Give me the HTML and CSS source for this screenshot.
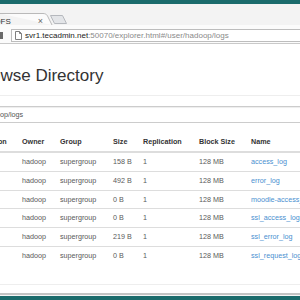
FILE: index.html
```html
<!DOCTYPE html>
<html lang="en">
<head>
    <meta charset="UTF-8">
    <meta name="viewport" content="width=device-width, initial-scale=1.0">
    <title>Browsing HDFS</title>
    <link rel="stylesheet" href="styles.css">
</head>
<body>
    <div class="titlebar"></div>

    <div class="tabstrip">
        <svg class="tab-shape" width="300" height="21" viewBox="0 0 300 21">
            <path d="M0 9.5 H43 C47 9.5 47.5 12 49 15 L52 21" fill="#fbfbfb" stroke="#b9b9b9" stroke-width="1"/>
            <path d="M50.5 11.5 H62.5 L66.5 19.5 H54.5 Z" fill="#e3e5e8" stroke="#b5b8bd" stroke-width="1"/>
        </svg>
        <div class="tab">
            <span class="tab-title">HDFS</span>
            <span class="tab-close">&times;</span>
        </div>
    </div>

    <div class="toolbar">
        <div class="toolbar-btn"></div>
        <div class="omnibox">
            <svg class="page-icon" width="7" height="9" viewBox="0 0 7 9">
                <path d="M0.5 0.5 H4.5 L6.5 2.5 V8.5 H0.5 Z M4.5 0.5 V2.5 H6.5" fill="#fff" stroke="#808080" stroke-width="1"/>
            </svg>
            <span class="url-host">svr1.tecadmin.net</span><span class="url-rest">:50070/explorer.html#/user/hadoop/logs</span>
        </div>
    </div>

    <div class="page">
        <div class="container">
            <div class="page-header">
                <h1>Browse Directory</h1>
            </div>

            <div class="path-input">/user/hadoop/logs</div>

            <table class="explorer-table">
                <colgroup>
                    <col class="col-perm">
                    <col class="col-owner">
                    <col class="col-group">
                    <col class="col-size">
                    <col class="col-repl">
                    <col class="col-block">
                    <col>
                </colgroup>
                <thead>
                    <tr>
                        <th>Permission</th>
                        <th>Owner</th>
                        <th>Group</th>
                        <th>Size</th>
                        <th>Replication</th>
                        <th>Block Size</th>
                        <th>Name</th>
                    </tr>
                </thead>
                <tbody id="explorer-body"></tbody>
            </table>

            <hr>
        </div>
    </div>

    <div class="frame-bottom"></div>

    <script>
        const files = [
            { size: '158 B', name: 'access_log' },
            { size: '492 B', name: 'error_log' },
            { size: '0 B', name: 'moodle-access_log' },
            { size: '0 B', name: 'ssl_access_log' },
            { size: '219 B', name: 'ssl_error_log' },
            { size: '0 B', name: 'ssl_request_log' }
        ];

        const body = document.getElementById('explorer-body');
        files.forEach(function (f) {
            const tr = document.createElement('tr');
            tr.innerHTML =
                '<td>-rw-r--r--</td>' +
                '<td>hadoop</td>' +
                '<td>supergroup</td>' +
                '<td>' + f.size + '</td>' +
                '<td>1</td>' +
                '<td>128 MB</td>' +
                '<td><a href="#">' + f.name + '</a></td>';
            body.appendChild(tr);
        });
    </script>
</body>
</html>
```

FILE: styles.css
```css
html, body {
    margin: 0;
    padding: 0;
}

body {
    width: 300px;
    height: 300px;
    overflow: hidden;
    display: flex;
    flex-direction: column;
    background-color: #f6f6f6;
    font-family: "Liberation Sans", Arial, sans-serif;
}

.titlebar {
    height: 4px;
    flex-shrink: 0;
    background-color: #1b6b6c;
}

.tabstrip {
    position: relative;
    height: 21px;
    flex-shrink: 0;
    background-color: #f3f3f3;
}

.tab-shape {
    position: absolute;
    left: 0;
    top: 0;
}

.tab {
    position: absolute;
    left: -11px;
    top: 11px;
    width: 56px;
    height: 12px;
    display: flex;
    align-items: center;
    justify-content: space-between;
    font-size: 8px;
    color: #333;
}

.tab-close {
    font-size: 9px;
    color: #666;
    margin-right: 2px;
}

.toolbar {
    height: 14px;
    padding-top: 4px;
    flex-shrink: 0;
    display: flex;
    align-items: flex-start;
    background-color: #fbfbfb;
    border-bottom: 1px solid #c9c9c9;
}

.toolbar-btn {
    width: 3px;
    height: 7px;
    margin-top: 3px;
    background-color: #6a6a6a;
}

.omnibox {
    flex: 1;
    height: 11px;
    margin-left: 8px;
    margin-right: -10px;
    padding-left: 3px;
    display: flex;
    align-items: center;
    background-color: #fff;
    border: 1px solid #bdbdbd;
    font-size: 8px;
    white-space: nowrap;
}

.page-icon {
    margin-right: 3px;
}

.url-host {
    color: #222;
}

.url-rest {
    color: #8a8a8a;
}

.page {
    flex: 1;
    overflow: hidden;
    background-color: #fff;
    color: #333;
}

.container {
    width: 420px;
    margin-left: -41px;
}

.page-header {
    margin: 22.8px 0 10px;
    padding-bottom: 9.5px;
    border-bottom: 1px solid #eee;
}

h1 {
    margin: 0 0 0 15px;
    font-size: 17px;
    line-height: 18.7px;
    font-weight: normal;
    color: #333;
}

.path-input {
    padding: 2.5px 6px;
    font-size: 7.2px;
    line-height: 9.75px;
    color: #555;
    border: 1px solid #ccc;
    box-shadow: inset 0 1px 1px rgba(0, 0, 0, 0.075);
}

.explorer-table {
    width: 420px;
    margin-top: 10.5px;
    table-layout: fixed;
    border-collapse: collapse;
    font-size: 7.2px;
    line-height: 9.75px;
}

.col-perm { width: 59px; }
.col-owner { width: 38px; }
.col-group { width: 53px; }
.col-size { width: 30px; }
.col-repl { width: 56px; }
.col-block { width: 52px; }

.explorer-table th,
.explorer-table td {
    padding: 4px;
    text-align: left;
    white-space: nowrap;
    overflow: hidden;
}

.explorer-table th:first-child,
.explorer-table td:first-child {
    padding-left: 9px;
}

.explorer-table th {
    font-weight: bold;
    color: #333;
    border-bottom: 2px solid #ddd;
}

.explorer-table td {
    color: #5a5a5a;
    border-top: 1px solid #ddd;
}

.explorer-table a {
    color: #4a8fd0;
    text-decoration: none;
}

hr {
    margin: 19.5px 0 0;
    border: 0;
    border-top: 1px solid #eee;
}

.frame-bottom {
    height: 4px;
    flex-shrink: 0;
    padding-top: 1px;
    border-top: 2px solid #c4c4c4;
    background-color: #1b6b6c;
    background-clip: content-box;
}
```
